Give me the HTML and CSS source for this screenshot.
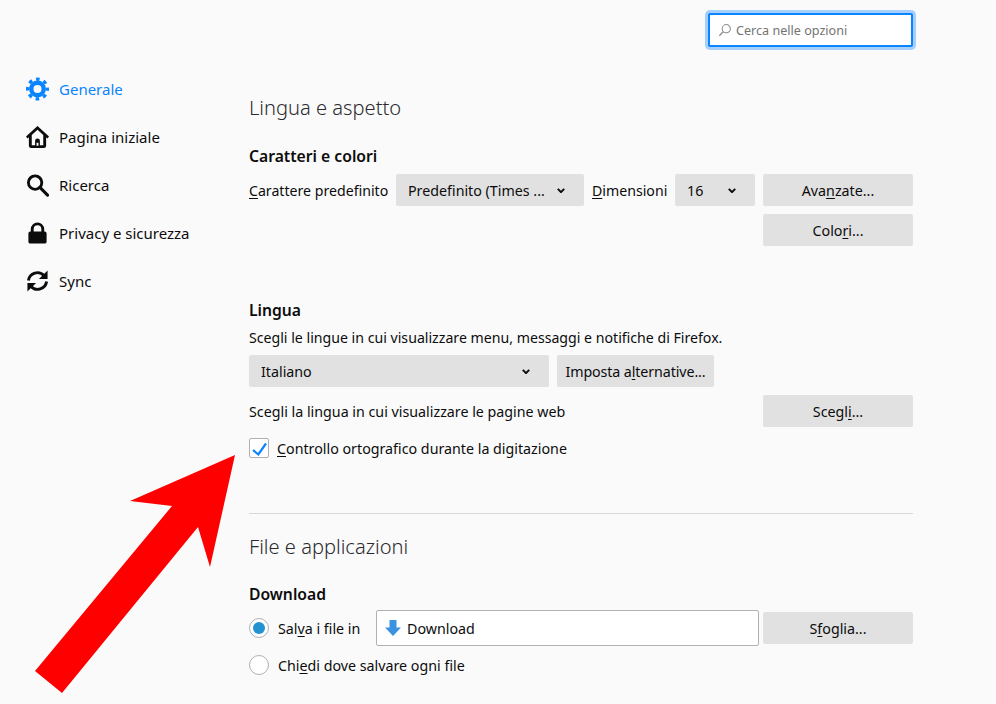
FILE: index.html
```html
<!DOCTYPE html>
<html lang="it">
<head>
<meta charset="utf-8">
<title>Opzioni</title>
<link rel="stylesheet" href="styles.css">
</head>
<body>
<div class="page">
  <nav class="sidebar">
    <a class="nav-item active"><svg class="nav-icon" viewBox="0 0 24 24"><circle cx="12" cy="12" r="6.500" fill="none" stroke="#0a84ff" stroke-width="4.600"/><circle cx="12" cy="12" r="10.300" fill="none" stroke="#0a84ff" stroke-width="3.400" stroke-dasharray="3.800 4.290" stroke-dashoffset="1.900"/></svg><span>Generale</span></a>
    <a class="nav-item"><svg class="nav-icon" viewBox="0 0 24 24"><path fill="#0c0c0d" fill-rule="evenodd" d="M12 0.500 24 11.500 22.400 13.600 21 12.300V21a2.500 2.500 0 0 1-2.500 2.500h-13A2.500 2.500 0 0 1 3 21V12.300L1.600 13.600 0 11.500zM12 4.500 6 10V20.500h3.500V16a2.500 2.500 0 0 1 5 0V20.500H18V10zM11 18h2v3h-2z"/></svg><span>Pagina iniziale</span></a>
    <a class="nav-item"><svg class="nav-icon" viewBox="0 0 24 24"><circle cx="9.500" cy="9.500" r="7" fill="none" stroke="#0c0c0d" stroke-width="3"/><path d="M14.500 14.500 22.500 22.500" stroke="#0c0c0d" stroke-width="3.200" stroke-linecap="round"/></svg><span>Ricerca</span></a>
    <a class="nav-item"><svg class="nav-icon" viewBox="0 0 24 24"><path fill="#0c0c0d" fill-rule="evenodd" d="M12 1a7 7 0 0 0-7 7v2.500H4.500A2 2 0 0 0 2.500 12.500v8.500a2 2 0 0 0 2 2h15a2 2 0 0 0 2-2v-8.500a2 2 0 0 0-2-2H19V8a7 7 0 0 0-7-7zM8 10.500V8a4 4 0 0 1 8 0v2.500z"/></svg><span>Privacy e sicurezza</span></a>
    <a class="nav-item"><svg class="nav-icon" viewBox="0 0 24 24"><path fill="none" stroke="#0c0c0d" stroke-width="3" d="M2.500 11.500A9.500 9.500 0 0 1 19 6.500"/><path fill="none" stroke="#0c0c0d" stroke-width="3" d="M21.500 12.500A9.500 9.500 0 0 1 5 17.500"/><path fill="#0c0c0d" d="M22.500 1v9h-9zM1.500 23v-9h9z"/></svg><span>Sync</span></a>
  </nav>

  <main class="content">
    <div class="search-row">
      <div class="search">
        <svg class="search-icon" viewBox="0 0 16 16"><circle cx="9.500" cy="6.500" r="4.700" fill="none" stroke="#8f8f94" stroke-width="1.200"/><path d="M6 10 1.500 14.500" stroke="#8f8f94" stroke-width="1.600"/></svg>
        <span>Cerca nelle opzioni</span>
      </div>
    </div>

    <h1 class="section-title first">Lingua e aspetto</h1>
    <h2 class="sub-title">Caratteri e colori</h2>
    <div class="row fonts-row">
      <label class="inline-label label-font"><u>C</u>arattere predefinito</label>
      <div class="select select-font"><span>Predefinito (Times ...</span><svg class="chevron" viewBox="0 0 10 6"><path d="M1 1 5 5 9 1" fill="none" stroke="#0c0c0d" stroke-width="2.500"/></svg></div>
      <label class="inline-label label-size"><u>D</u>imensioni</label>
      <div class="select select-size"><span>16</span><svg class="chevron" viewBox="0 0 10 6"><path d="M1 1 5 5 9 1" fill="none" stroke="#0c0c0d" stroke-width="2.500"/></svg></div>
      <div class="button wide">Ava<u>n</u>zate...</div>
    </div>
    <div class="row end colors-row"><div class="button wide">Colo<u>r</u>i...</div></div>

    <h2 class="sub-title lang-title">Lingua</h2>
    <p class="desc">Scegli le lingue in cui visualizzare menu, messaggi e notifiche di Firefox.</p>
    <div class="row lang-row">
      <div class="select select-lang"><span>Italiano</span><svg class="chevron" viewBox="0 0 10 6"><path d="M1 1 5 5 9 1" fill="none" stroke="#0c0c0d" stroke-width="2.500"/></svg></div>
      <div class="button alt">Imposta a<u>l</u>ternative...</div>
    </div>
    <div class="row between web-row">
      <span>Scegli la lingua in cui visualizzare le pagine web</span>
      <div class="button wide">Scegl<u>i</u>...</div>
    </div>
    <div class="row check-row">
      <span class="checkbox"><svg viewBox="0 0 18 18"><path d="M3 11 8.300 15.500 16 4.500" fill="none" stroke="#0a84ff" stroke-width="2.200"/></svg></span>
      <span><u>C</u>ontrollo ortografico durante la digitazione</span>
    </div>

    <hr class="divider">

    <h1 class="section-title">File e applicazioni</h1>
    <h2 class="sub-title dl-title">Download</h2>
    <div class="row dl-row">
      <span class="radio checked"></span>
      <span class="radio-label">Sal<u>v</u>a i file in</span>
      <div class="path"><svg class="dl-icon" viewBox="0 0 16 16"><path fill="#3a92e0" d="M4.500 0h7v7.500H16l-8 8.500L0 7.500h4.500z"/></svg><span>Download</span></div>
      <div class="button wide">S<u>f</u>oglia...</div>
    </div>
    <div class="row ask-row">
      <span class="radio"></span>
      <span class="radio-label">Chi<u>e</u>di dove salvare ogni file</span>
    </div>
  </main>
</div>
<svg class="arrow" viewBox="0 0 996 704"><polygon fill="#ff0000" points="235,455 130,501 172,506 35,671 62,693 198,527 210,567"/></svg>
</body>
</html>
```

FILE: styles.css
```css
* { box-sizing: border-box; }
html, body { margin: 0; height: 704px; overflow: hidden; }
body {
  background: #fafafa;
  color: #0c0c0d;
  font-family: "Noto Sans", "Open Sans", sans-serif;
  font-size: 14.25px;
  position: relative;
}
u { text-underline-offset: 2px; }
.page { display: flex; height: 704px; }
.sidebar { width: 249px; flex: none; padding-top: 65px; padding-left: 26px; }
.nav-item { display: flex; align-items: center; height: 48px; gap: 10px; font-size: 15px; }
.nav-item.active { color: #0a84ff; }
.nav-icon { width: 23px; height: 24px; flex: none; }
.content { width: 664px; flex: none; display: flex; flex-direction: column; }
.search-row { display: flex; justify-content: flex-end; padding-top: 13px; }
.search {
  width: 205px; height: 34px; display: flex; align-items: center; gap: 4px;
  padding-left: 8px; background: #fff; color: #737373; font-size: 12.6px;
  border: 2px solid #0a84ff; border-radius: 2px;
  box-shadow: 0 0 0 3px #a6d0fb;
}
.search-icon { width: 14px; height: 14px; flex: none; }
.section-title { font-size: 20.1px; font-weight: 300; margin: 0; line-height: 28px; color: #2a2a2e; }
.section-title.first { margin-top: 47px; }
.sub-title { font-size: 15.7px; font-weight: 600; margin: 0; line-height: 22px; }
.content > .sub-title { margin-top: 23px; }
.content > .lang-title { margin-top: 53px; }
.content > .dl-title { margin-top: 22px; }
.desc { margin: 6px 0 0; line-height: 22px; font-size: 14.15px; }
.row { display: flex; align-items: center; }
.end { justify-content: flex-end; }
.between { justify-content: space-between; }
.fonts-row { margin-top: 7px; }
.colors-row { margin-top: 8px; }
.lang-row { margin-top: 6px; gap: 8px; }
.web-row { margin-top: 8px; }
.check-row { margin-top: 11px; gap: 8px; }
.inline-label { white-space: nowrap; flex: none; font-size: 14.15px; }
.label-font { width: 147px; }
.label-size { width: 83px; }
.select, .button { height: 32px; background: #e1e1e1; border-radius: 2px; flex: none; }
.select { display: flex; align-items: center; justify-content: space-between; padding: 0 19px 0 12px; white-space: nowrap; }
.select-font { width: 188px; margin-right: 8px; }
.select-size { width: 80px; margin-right: 8px; }
.select-lang { width: 300px; }
.chevron { width: 8px; height: 5px; flex: none; }
.button { display: flex; align-items: center; justify-content: center; white-space: nowrap; }
.wide { width: 150px; }
.alt { width: 157px; letter-spacing: -0.1px; }
.checkbox { width: 20px; height: 20px; border: 1px solid #b1b1b3; background: #fff; border-radius: 2px; flex: none; display: flex; }
.checkbox svg { width: 18px; height: 18px; }
.divider { border: 0; border-top: 1px solid #d7d7db; width: 100%; margin: 55px 0 19px; }
.dl-row { margin-top: 5px; }
.radio { width: 20px; height: 20px; border: 1px solid #b1b1b3; border-radius: 50%; background: #fff; flex: none; display: flex; align-items: center; justify-content: center; }
.radio.checked::after { content: ""; width: 12px; height: 12px; border-radius: 50%; background: #2292d0; }
.radio-label { margin-left: 9px; white-space: nowrap; }
.dl-row .radio-label { width: 98px; flex: none; }
.path { width: 383px; height: 36px; margin-right: 4px; flex: none; display: flex; align-items: center; gap: 6px; padding-left: 8px; background: #fff; border: 1px solid #b1b1b3; border-radius: 2px; }
.dl-icon { width: 16px; height: 16px; flex: none; }
.ask-row { margin-top: 9px; }
.arrow { position: absolute; left: 0; top: 0; width: 996px; height: 704px; pointer-events: none; }
```
